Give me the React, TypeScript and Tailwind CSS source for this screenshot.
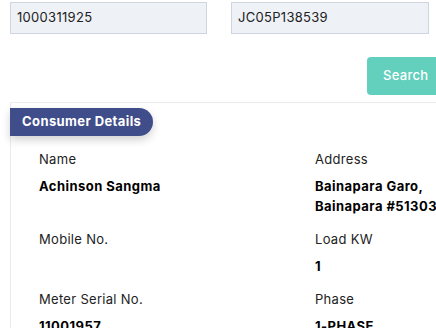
import React from "react";

const font = { fontFamily: "Inter, 'Open Sans', sans-serif" };

function Field({ label, value }: { label: string; value: React.ReactNode }) {
  return (
    <div className="flex flex-col">
      <div className="text-[13px] leading-5 tracking-[0.3px] text-[#222]">{label}</div>
      <div className="mt-[7px] min-h-5 whitespace-nowrap text-[13px] font-bold leading-5 tracking-[0.45px] text-black">{value}</div>
    </div>
  );
}

export default function App() {
  return (
    <div className="h-[328px] w-[436px] overflow-hidden bg-white" style={font}>
      <div className="w-[470px] pt-[2px]">
        <div className="flex pl-[10px]">
          <div className="flex h-[32px] w-[197px] items-center border border-[#cfd5de] bg-[#eef1f6] px-[6px] text-[13px] tracking-[0.3px] text-[#222]">
            1000311925
          </div>
          <div className="ml-[24px] flex h-[32px] w-[198px] items-center border border-[#cfd5de] bg-[#eef1f6] px-[6px] text-[13px] tracking-[0.3px] text-[#222]">
            JC05P138539
          </div>
        </div>
        <div className="mt-[23px] flex pl-[367px]">
          <div className="flex h-[38px] w-[80px] items-center rounded-[4px] bg-[#63cfbd] pl-[16px] text-[13px] font-medium tracking-[0.3px] text-white">
            Search
          </div>
        </div>
        <div className="ml-[10px] mt-[7px] border-l border-t border-[#ebebeb] pb-10">
          <div className="mt-[5px] ml-[-1px] flex h-[28px] w-[143px] items-center rounded-r-full bg-[#3f4d8a] pl-[12px] text-[13px] font-bold tracking-[0.4px] text-white shadow-[0_4px_8px_rgba(0,0,0,0.18)]">
            Consumer Details
          </div>
          <div className="mt-[13px] grid grid-cols-[276px_1fr] gap-y-[13px] pl-[28px]">
            <Field label="Name" value="Achinson Sangma" />
            <Field
              label="Address"
              value={
                <>
                  Bainapara Garo,
                  <br />
                  Bainapara #513030
                </>
              }
            />
            <Field label="Mobile No." value="" />
            <Field label="Load KW" value="1" />
            <Field label="Meter Serial No." value="11001957" />
            <Field label="Phase" value="1-PHASE" />
          </div>
        </div>
      </div>
    </div>
  );
}
